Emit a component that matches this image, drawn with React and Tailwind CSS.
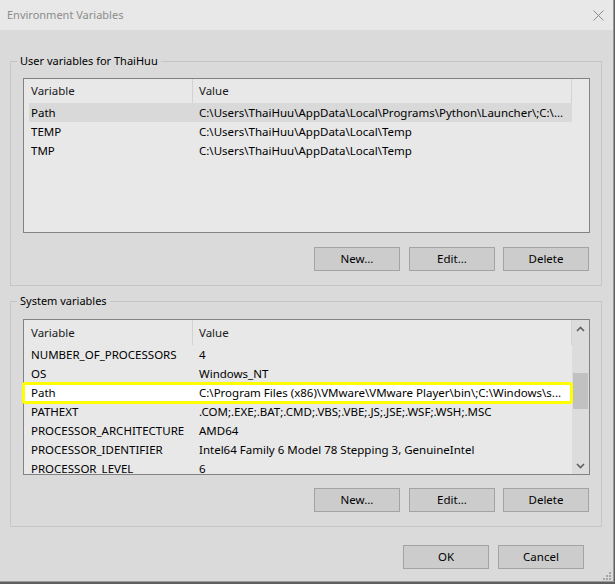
import React from "react";

function Btn({ children, className = "" }) {
  return (
    <button
      className={
        "w-[86px] h-[24px] bg-[#cccccc] border border-[#a3a3a3] text-[11.5px] leading-none text-[#000] flex items-center justify-center " +
        className
      }
    >
      {children}
    </button>
  );
}

function Header({ h }) {
  return (
    <div className={"flex ml-[5px] w-[543px] items-center text-[#1a1a1a] " + h}>
      <div className="w-[163px] pl-[2px]">Variable</div>
      <div className="w-[380px] h-full flex items-center pl-[6px] border-l border-r border-[#d2d2d2]">
        Value
      </div>
    </div>
  );
}

function Row({ name, value, selected, marked }) {
  return (
    <div
      className={
        "relative flex h-[19px] ml-[5px] w-[543px] items-center text-[#000] " +
        (selected ? "bg-[#d9d9d9]" : "")
      }
    >
      {marked && <div className="absolute inset-y-0 -left-[4px] right-[2px] bg-white"></div>}
      <div className="relative w-[163px] pl-[2px] whitespace-nowrap">{name}</div>
      <div className="relative w-[380px] pl-[7px] whitespace-nowrap overflow-hidden">{value}</div>
    </div>
  );
}

function Chevron({ up }) {
  return (
    <svg width="9" height="6" viewBox="0 0 9 6">
      <polyline
        points={up ? "1,5 4.5,1.5 8,5" : "1,1 4.5,4.5 8,1"}
        fill="none"
        stroke="#606060"
        strokeWidth="1.6"
      />
    </svg>
  );
}

function Scrollbar() {
  return (
    <div className="w-[17px] h-full bg-[#dcdcdc] flex flex-col">
      <div className="h-[17px] flex items-center justify-center">
        <Chevron up />
      </div>
      <div className="h-[36px]"></div>
      <div className="h-[36px] mx-[1px] bg-[#c1c1c1]"></div>
      <div className="flex-1"></div>
      <div className="h-[17px] flex items-center justify-center">
        <Chevron />
      </div>
    </div>
  );
}

export default function App() {
  const userRows = [
    ["Path", "C:\\Users\\ThaiHuu\\AppData\\Local\\Programs\\Python\\Launcher\\;C:\\...", true],
    ["TEMP", "C:\\Users\\ThaiHuu\\AppData\\Local\\Temp"],
    ["TMP", "C:\\Users\\ThaiHuu\\AppData\\Local\\Temp"],
  ];
  const sysRows = [
    ["NUMBER_OF_PROCESSORS", "4"],
    ["OS", "Windows_NT"],
    ["Path", "C:\\Program Files (x86)\\VMware\\VMware Player\\bin\\;C:\\Windows\\s...", false, true],
    ["PATHEXT", ".COM;.EXE;.BAT;.CMD;.VBS;.VBE;.JS;.JSE;.WSF;.WSH;.MSC"],
    ["PROCESSOR_ARCHITECTURE", "AMD64"],
    ["PROCESSOR_IDENTIFIER", "Intel64 Family 6 Model 78 Stepping 3, GenuineIntel"],
    ["PROCESSOR_LEVEL", "6"],
  ];

  return (
    <div className="w-[615px] h-[584px] bg-[#5f5f5f] overflow-hidden font-['Noto_Sans',sans-serif] text-[11.5px]">
      <div className="w-[614px] h-[582px] bg-[#dadada] border-r border-b border-[#9a9a9a] flex flex-col">
        {/* Title bar */}
        <div className="h-[30px] shrink-0 bg-[#e8e8e8] flex items-center justify-between pl-[7px] pr-[9px]">
          <span className="text-[#8c8c8c] text-[11px]">Environment Variables</span>
          <svg width="11" height="11" viewBox="0 0 11 11">
            <path d="M0.5 0.5 L10.5 10.5 M10.5 0.5 L0.5 10.5" stroke="#8a8a8a" strokeWidth="1" />
          </svg>
        </div>

        {/* Body */}
        <div className="flex-1 flex flex-col pl-[10px] pr-[11px] pt-[23px] relative">
          <fieldset className="border border-[#c6c6c6] pl-[12px] pr-[11px] pb-[14px]">
            <legend className="-ml-[6px] px-[3px] h-[16px] leading-[16px] text-[11px] text-[#000]">
              User variables for ThaiHuu
            </legend>
            <div className="mt-[9px] h-[155px] border border-[#828282] bg-[#e8e8e8] overflow-hidden">
              <Header h="h-[24px]" />
              {userRows.map((r) => (
                <Row key={r[0]} name={r[0]} value={r[1]} selected={r[2]} />
              ))}
            </div>
            <div className="mt-[14px] flex justify-end pr-[1px]">
              <Btn>New...</Btn>
              <Btn className="ml-[9px]">Edit...</Btn>
              <Btn className="ml-[8px]">Delete</Btn>
            </div>
          </fieldset>

          <fieldset className="mt-[7px] border border-[#c6c6c6] pl-[12px] pr-[11px] pb-[14px]">
            <legend className="-ml-[6px] px-[3px] h-[16px] leading-[16px] text-[11px] text-[#000]">
              System variables
            </legend>
            <div className="relative mt-[10px]">
              <div className="h-[156px] border border-[#828282] bg-[#e8e8e8] overflow-hidden flex">
                <div className="w-[548px] h-full overflow-hidden">
                  <Header h="h-[25px]" />
                  {sysRows.map((r) => (
                    <Row key={r[0]} name={r[0]} value={r[1]} selected={r[2]} marked={r[3]} />
                  ))}
                </div>
                <Scrollbar />
              </div>
              {/* yellow annotation box */}
              <div className="absolute top-[63px] -left-[1px] w-[551px] h-[22px] border-[3px] border-[#ffff00] rounded-[3px] pointer-events-none"></div>
            </div>
            <div className="mt-[13px] flex justify-end pr-[1px]">
              <Btn>New...</Btn>
              <Btn className="ml-[9px]">Edit...</Btn>
              <Btn className="ml-[8px]">Delete</Btn>
            </div>
          </fieldset>

          <div className="mt-[18px] flex justify-end pr-[18px]">
            <Btn>OK</Btn>
            <Btn className="ml-[9px]">Cancel</Btn>
          </div>

          {/* resize grip */}
          <svg className="absolute right-[2px] bottom-[1px]" width="9" height="9" viewBox="0 0 9 9">
            <rect x="7" y="1" width="2" height="2" fill="#a6a6a6" />
            <rect x="4" y="4" width="2" height="2" fill="#a6a6a6" />
            <rect x="7" y="4" width="2" height="2" fill="#a6a6a6" />
            <rect x="1" y="7" width="2" height="2" fill="#a6a6a6" />
            <rect x="4" y="7" width="2" height="2" fill="#a6a6a6" />
            <rect x="7" y="7" width="2" height="2" fill="#a6a6a6" />
          </svg>
        </div>
      </div>
    </div>
  );
}
